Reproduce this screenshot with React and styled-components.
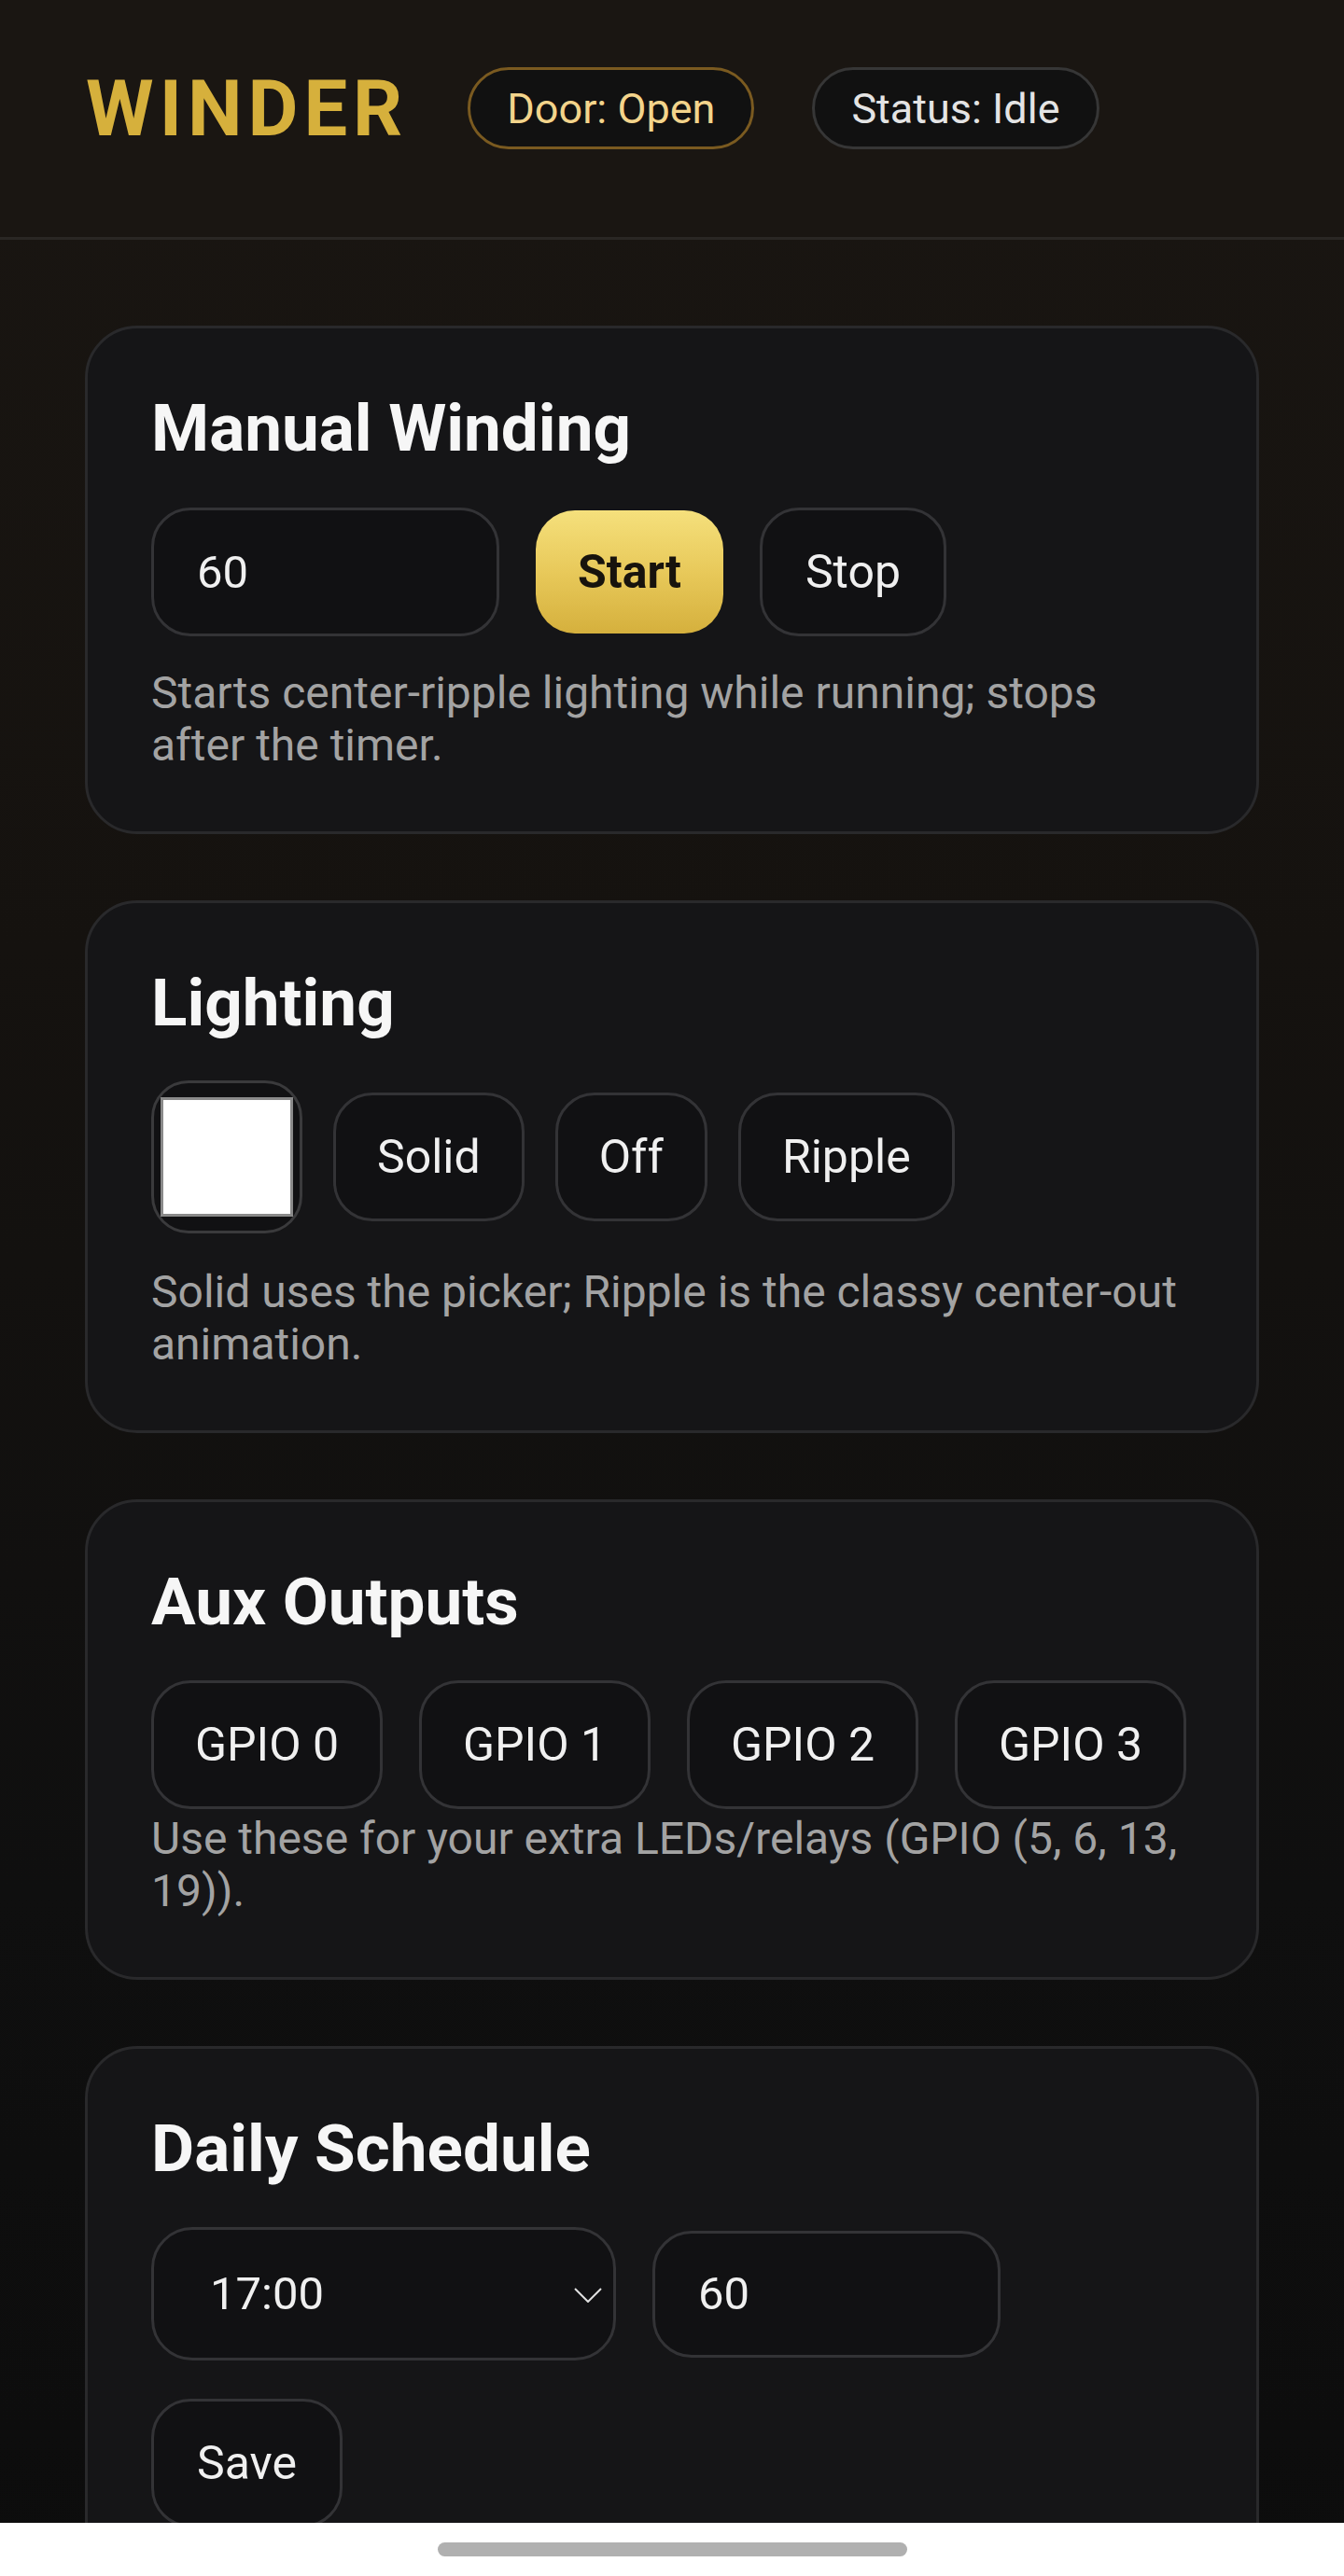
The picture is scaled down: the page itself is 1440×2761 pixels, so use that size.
import React from "react";
import styled, { createGlobalStyle } from "styled-components";

const GlobalStyle = createGlobalStyle`
  html, body { margin: 0; padding: 0; }
  body {
    background: #0d0d0d;
    font-family: Roboto, "Noto Sans", "Liberation Sans", sans-serif;
    color: #f2f2f2;
  }
  * { box-sizing: border-box; }
`;

const Page = styled.div`
  min-height: 2761px;
  background: linear-gradient(180deg, #1a1612 0%, #15120f 35%, #0f0f0f 70%, #0c0c0c 100%);
`;

const Header = styled.header`
  height: 257px;
  display: flex;
  align-items: center;
  padding: 0 92px 22px;
  border-bottom: 3px solid #2a2724;
  background: #1a1612;
`;

const Brand = styled.div`
  font-size: 83px;
  font-weight: 700;
  letter-spacing: 6px;
  color: #d6b03c;
  margin-right: 64px;
  line-height: 1;
`;

const Pill = styled.div`
  height: 88px;
  padding: 0 39px;
  display: flex;
  align-items: center;
  border-radius: 44px;
  background: #111111;
  border: 3px solid ${(p) => (p.$gold ? "#7a5a20" : "#363636")};
  color: ${(p) => (p.$gold ? "#f3d48b" : "#e4e4e4")};
  font-size: 45px;
  margin-right: 62px;
`;

const Main = styled.main`
  display: flex;
  flex-direction: column;
  gap: 71px;
  padding: 92px 91px 120px;
`;

const Card = styled.section`
  background: #151517;
  border: 3px solid #29292b;
  border-radius: 56px;
  padding: 66px 68px 64px;
`;

const Title = styled.h2`
  margin: 0 0 ${(p) => p.$gap || 45}px;
  font-size: 71px;
  font-weight: 700;
  line-height: 81px;
  color: #f6f6f6;
`;

const Row = styled.div`
  display: flex;
  align-items: center;
  gap: ${(p) => p.$gap || 39}px;
  margin-bottom: ${(p) => p.$mb ?? 33}px;
`;

const Button = styled.button`
  height: 138px;
  padding: 0 ${(p) => p.$pad ?? 46}px;
  border-radius: 42px;
  border: 3px solid #333336;
  background: #111113;
  color: #f0f0f0;
  font-family: inherit;
  font-size: 50px;
  font-weight: 400;
  white-space: nowrap;
  cursor: pointer;
  flex: ${(p) => (p.$grow ? "0 0 248px" : "0 0 auto")};
`;

const PrimaryButton = styled(Button)`
  height: 132px;
  border: none;
  padding: 0 45px;
  background: linear-gradient(180deg, #f5e07c 0%, #e8c95a 50%, #d5b03d 100%);
  color: #17130d;
  font-weight: 700;
`;

const TextInput = styled.input`
  width: ${(p) => p.$w || 373}px;
  height: ${(p) => p.$h || 138}px;
  padding: 0 46px;
  border-radius: 42px;
  border: 3px solid #333336;
  background: #111113;
  color: #f0f0f0;
  font-family: inherit;
  font-size: 49px;
  outline: none;
`;

const Swatch = styled.div`
  width: 162px;
  height: 164px;
  border-radius: 40px;
  border: 3px solid #3a3a3c;
  background: #111113;
  display: flex;
  align-items: center;
  justify-content: center;
`;

const SwatchColor = styled.div`
  width: 142px;
  height: 128px;
  background: #ffffff;
  border: 3px solid #8a8a8a;
`;

const Hint = styled.p`
  margin: 0;
  font-size: 48px;
  line-height: 56px;
  color: #a3a3a3;
`;

const SelectWrap = styled.div`
  position: relative;
  width: 498px;
  height: 143px;
`;

const Select = styled.select`
  appearance: none;
  -webkit-appearance: none;
  width: 100%;
  height: 100%;
  padding: 0 60px;
  border-radius: 44px;
  border: 3px solid #333336;
  background: #111113;
  color: #f0f0f0;
  font-family: inherit;
  font-size: 49px;
  outline: none;
`;

const Chevron = styled.svg`
  position: absolute;
  right: 15px;
  top: 65px;
  width: 30px;
  height: 16px;
  pointer-events: none;
`;

const NavBar = styled.div`
  position: fixed;
  left: 0;
  right: 0;
  bottom: 0;
  height: 57px;
  background: #ffffff;
  display: flex;
  justify-content: center;
  padding-top: 21px;
`;

const NavHandle = styled.div`
  width: 503px;
  height: 15px;
  border-radius: 8px;
  background: #b0b0b0;
`;

export default function App() {
  return (
    <Page>
      <GlobalStyle />
      <Header>
        <Brand>WINDER</Brand>
        <Pill $gold>Door: Open</Pill>
        <Pill>Status: Idle</Pill>
      </Header>
      <Main>
        <Card>
          <Title>Manual Winding</Title>
          <Row>
            <TextInput defaultValue="60" />
            <PrimaryButton>Start</PrimaryButton>
            <Button>Stop</Button>
          </Row>
          <Hint>Starts center-ripple lighting while running; stops after the timer.</Hint>
        </Card>

        <Card>
          <Title $gap={43}>Lighting</Title>
          <Row $gap={33} $mb={35}>
            <Swatch>
              <SwatchColor />
            </Swatch>
            <Button $pad={44}>Solid</Button>
            <Button $pad={44}>Off</Button>
            <Button $pad={44}>Ripple</Button>
          </Row>
          <Hint>Solid uses the picker; Ripple is the classy center-out animation.</Hint>
        </Card>

        <Card>
          <Title $gap={44}>Aux Outputs</Title>
          <Row $gap={39} $mb={4}>
            <Button $grow $pad={0}>GPIO 0</Button>
            <Button $grow $pad={0}>GPIO 1</Button>
            <Button $grow $pad={0}>GPIO 2</Button>
            <Button $grow $pad={0}>GPIO 3</Button>
          </Row>
          <Hint>Use these for your extra LEDs/relays (GPIO (5, 6, 13, 19)).</Hint>
        </Card>

        <Card>
          <Title $gap={44}>Daily Schedule</Title>
          <Row $gap={39} $mb={41}>
            <SelectWrap>
              <Select defaultValue="17:00">
                <option>17:00</option>
              </Select>
              <Chevron viewBox="0 0 30 16">
                <path d="M1 1 L15 15 L29 1" fill="none" stroke="#e0e0e0" strokeWidth="2" />
              </Chevron>
            </SelectWrap>
            <TextInput defaultValue="60" $h={136} />
          </Row>
          <Row $mb={0}>
            <Button>Save</Button>
          </Row>
        </Card>
      </Main>
      <NavBar>
        <NavHandle />
      </NavBar>
    </Page>
  );
}
